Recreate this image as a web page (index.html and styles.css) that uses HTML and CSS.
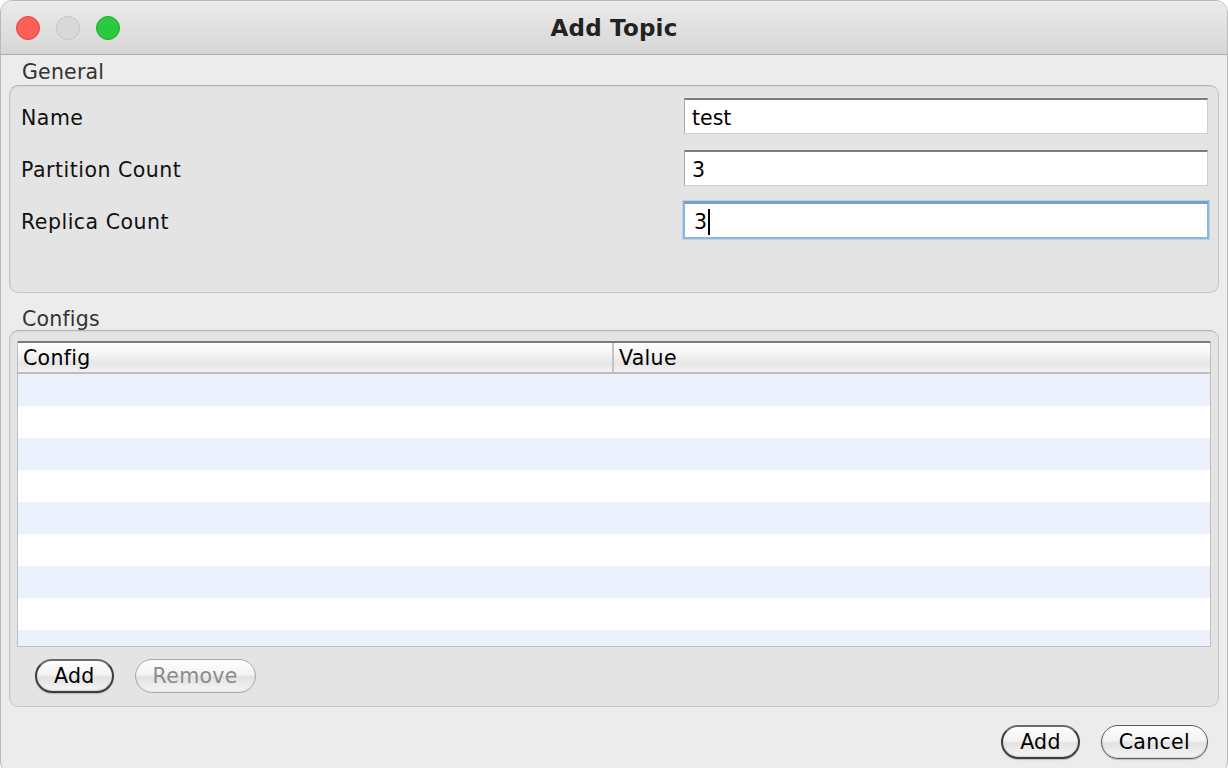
FILE: index.html
```html
<!DOCTYPE html>
<html>
<head>
<meta charset="utf-8">
<link rel="stylesheet" href="styles.css">
</head>
<body>
<div class="window">
  <div class="titlebar">
    <div class="lights">
      <span class="light red"></span>
      <span class="light gray"></span>
      <span class="light green"></span>
    </div>
    <div class="title">Add Topic</div>
    <div></div>
  </div>
  <div class="content">
    <div class="group-label">General</div>
    <div class="group general">
      <div class="row"><span class="label">Name</span><div class="field">test</div></div>
      <div class="row"><span class="label">Partition Count</span><div class="field">3</div></div>
      <div class="row"><span class="label">Replica Count</span><div class="field focus">3<span class="caret"></span></div></div>
    </div>
    <div class="group-label configs-label">Configs</div>
    <div class="group configs">
      <div class="table">
        <div class="thead">
          <div class="th col1">Config</div>
          <div class="th col2">Value</div>
        </div>
        <div class="tbody">
          <div class="tr alt"></div>
          <div class="tr"></div>
          <div class="tr alt"></div>
          <div class="tr"></div>
          <div class="tr alt"></div>
          <div class="tr"></div>
          <div class="tr alt"></div>
          <div class="tr"></div>
          <div class="tr alt"></div>
        </div>
      </div>
      <div class="btnrow">
        <button class="btn default">Add</button>
        <button class="btn disabled">Remove</button>
      </div>
    </div>
    <div class="footer">
      <button class="btn default">Add</button>
      <button class="btn">Cancel</button>
    </div>
  </div>
</div>
</body>
</html>
```

FILE: styles.css
```css
html, body {
  margin: 0;
  padding: 0;
  background: #ffffff;
}
body {
  font-family: "DejaVu Sans", "Liberation Sans", sans-serif;
  width: 1228px;
  height: 768px;
  overflow: hidden;
}
.window {
  box-sizing: border-box;
  width: 1228px;
  height: 774px;
  border: 1px solid #b9b9b9;
  border-radius: 12px;
  background: #ececec;
  overflow: hidden;
}
.titlebar {
  height: 53px;
  background: linear-gradient(#ebebeb, #d6d6d6);
  border-bottom: 1px solid #acacac;
  display: grid;
  grid-template-columns: 1fr auto 1fr;
  align-items: center;
}
.lights {
  display: flex;
  gap: 16px;
  padding-left: 15px;
  padding-top: 1px;
}
.light {
  width: 24px;
  height: 24px;
  border-radius: 50%;
  box-sizing: border-box;
}
.red { background: #fe5f57; border: 1px solid #e0443e; }
.gray { background: #d8d8d8; border: 1px solid #c3c3c3; }
.green { background: #2bc840; border: 1px solid #1aab29; }
.title {
  font-weight: bold;
  font-size: 23px;
  color: #222;
  letter-spacing: 0.2px;
}
.content {
  padding: 0 8px;
}
.group-label {
  font-size: 20.5px;
  letter-spacing: 0.2px;
  color: #333;
  padding-left: 13px;
  height: 30px;
  line-height: 34px;
}
.configs-label {
  margin-top: 14px;
  height: 23px;
  line-height: 25px;
}
.group {
  box-sizing: border-box;
  border: 1px solid #c6c6c6;
  border-top-color: #b4b4b4;
  border-radius: 9px;
  background: #e4e4e4;
  box-shadow: inset 1px 1px 1px rgba(0,0,0,0.06);
}
.general {
  height: 208px;
  padding: 12px 10px 0 11px;
  display: flex;
  flex-direction: column;
  gap: 16px;
}
.row {
  display: flex;
  justify-content: space-between;
  align-items: center;
  height: 36px;
}
.label {
  font-size: 20.5px;
  letter-spacing: 0.5px;
  color: #111;
  padding-top: 3px;
}
.field {
  box-sizing: border-box;
  width: 524px;
  height: 36px;
  background: #fff;
  border: 1px solid #cfcfcf;
  border-top: 2px solid #7d7d7d;
  border-left-color: #a9a9a9;
  font-size: 20.5px;
  color: #000;
  padding-left: 7px;
  padding-top: 2px;
  line-height: 32px;
  display: flex;
  align-items: center;
}
.field.focus {
  height: 38px;
  width: 526px;
  margin-right: -1px;
  border: 2px solid #8fb5dc;
  border-top: 3px solid #7aa0c8;
  box-shadow: 0 0 0 1px #b9d1ea;
  padding-left: 9px;
}
.caret {
  display: inline-block;
  width: 2px;
  height: 26px;
  background: #000;
  margin-left: 1px;
}
.configs {
  height: 377px;
  padding: 10px 7px 0 7px;
}
.table {
  box-sizing: border-box;
  height: 306px;
  border: 1px solid #bdbdbd;
  border-top: 0;
  background: #fff;
  overflow: hidden;
}
.thead {
  display: flex;
  box-sizing: border-box;
  height: 33px;
  border-top: 2px solid #7a7a7a;
  border-bottom: 2px solid #bcbcbc;
  background: linear-gradient(#ffffff 0%, #f4f4f4 40%, #e6e6e6 70%, #f2f2f2 100%);
}
.th {
  font-size: 20.5px;
  letter-spacing: 0.3px;
  color: #000;
  padding-left: 5px;
  line-height: 30px;
}
.col1 {
  width: 589px;
  border-right: 2px solid #c4c4c4;
}
.col2 {
  flex: 1;
}
.tr {
  height: 32px;
  background: #fff;
}
.tr.alt {
  background: #ebf1fc;
}
.btnrow {
  display: flex;
  gap: 21px;
  padding: 12px 0 0 18px;
}
.btn {
  box-sizing: border-box;
  height: 34px;
  border-radius: 17px;
  border: 1px solid #5c5c5c;
  background: linear-gradient(#ffffff 0%, #f3f3f3 45%, #e2e2e2 55%, #f7f7f7 100%);
  box-shadow: inset 0 -1px 2px rgba(0,0,0,0.15), 0 1px 1px rgba(0,0,0,0.2);
  font-family: "DejaVu Sans", "Liberation Sans", sans-serif;
  font-size: 20.5px;
  letter-spacing: 0.3px;
  color: #000;
  padding: 0 17px;
  line-height: 30px;
}
.btn.default {
  border: 2px solid #3c3c3c;
  border-top-color: #6a6a6a;
}
.btn.disabled {
  color: #8a8a8a;
  border-color: #a9a9a9;
  box-shadow: inset 0 -1px 2px rgba(0,0,0,0.08);
}
.footer {
  display: flex;
  justify-content: flex-end;
  gap: 21px;
  padding: 18px 11px 0 0;
}
```
